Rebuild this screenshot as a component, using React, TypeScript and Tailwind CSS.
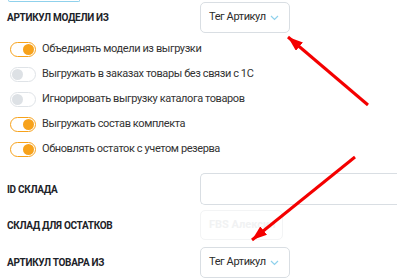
import React from 'react';

const toggles = [
  { label: 'Объединять модели из выгрузки', on: true },
  { label: 'Выгружать в заказах товары без связи с 1С', on: false },
  { label: 'Игнорировать выгрузку каталога товаров', on: false },
  { label: 'Выгружать состав комплекта', on: true },
  { label: 'Обновлять остаток с учетом резерва', on: true },
];

const Toggle: React.FC<{ on: boolean }> = ({ on }) => (
  <span
    className={`flex items-center w-[26px] h-[15px] rounded-full border-[1.5px] bg-white px-[1px] ${
      on ? 'border-[#f7a21b] justify-end' : 'border-[#dfe3e7] justify-start'
    }`}
  >
    <span className={`w-[11px] h-[11px] rounded-full ${on ? 'bg-[#f7a21b]' : 'bg-[#dde1e5]'}`} />
  </span>
);

const Select: React.FC = () => (
  <div className="flex items-center gap-[4px] w-[90px] h-[31px] pl-[8px] rounded-[5px] border border-[#d9dee3] bg-white">
    <span className="text-[11px] text-[#2b2b2b] tracking-[-0.4px] whitespace-nowrap">Тег Артикул</span>
    <svg width="9" height="6" viewBox="0 0 9 6" fill="none" className="shrink-0">
      <path d="M1 1l3.5 3.5L8 1" stroke="#8fd1ec" strokeWidth="1.2" />
    </svg>
  </div>
);

const Label: React.FC<{ children: React.ReactNode }> = ({ children }) => (
  <div className="w-[193px] shrink-0 text-[10px] font-bold text-[#1d2329] tracking-[-0.3px] uppercase">
    {children}
  </div>
);

export default function App() {
  return (
    <div className="relative w-[397px] h-[278px] overflow-hidden bg-white font-['Roboto',sans-serif]">
      <div className="ml-[8px] w-[72px] h-[2px] border-b border-x border-[#8fd1ec] rounded-b-[4px]" />

      <div className="flex items-center pl-[7px] h-[31px]">
        <Label>Артикул модели из</Label>
        <Select />
      </div>

      <div className="mt-[4px] pl-[10px]">
        {toggles.map((t) => (
          <div key={t.label} className="flex items-center gap-[6px] h-[25px]">
            <Toggle on={t.on} />
            <span className="text-[11px] text-[#333] whitespace-nowrap tracking-[-0.4px]">{t.label}</span>
          </div>
        ))}
      </div>

      <div className="flex items-center pl-[7px] mt-[11px] h-[32px]">
        <Label>ID склада</Label>
        <div className="flex-1 h-[32px] rounded-l-[5px] border border-r-0 border-[#d9dee3]" />
      </div>

      <div className="flex items-center pl-[7px] mt-[5px] h-[30px]">
        <Label>Склад для остатков</Label>
        <div className="flex items-center w-[83px] h-[30px] px-[8px] rounded-[5px] border border-[#f3f4f5] overflow-hidden">
          <span className="text-[11px] font-bold text-[#f1f2f3] whitespace-nowrap">FBS Алексин</span>
        </div>
      </div>

      <div className="flex items-center pl-[7px] mt-[7px] h-[31px]">
        <Label>Артикул товара из</Label>
        <Select />
      </div>

      <svg className="absolute inset-0 pointer-events-none" width="397" height="278">
        <defs>
          <marker id="ah" markerWidth="5" markerHeight="3.6" refX="5" refY="1.8" orient="auto" markerUnits="strokeWidth">
            <path d="M0 0L5 1.8L0 3.6z" fill="#f40000" />
          </marker>
        </defs>
        <line x1="368" y1="105" x2="288" y2="37" stroke="#f40000" strokeWidth="3" markerEnd="url(#ah)" />
        <line x1="355" y1="157" x2="252" y2="240" stroke="#f40000" strokeWidth="3" markerEnd="url(#ah)" />
      </svg>
    </div>
  );
}
